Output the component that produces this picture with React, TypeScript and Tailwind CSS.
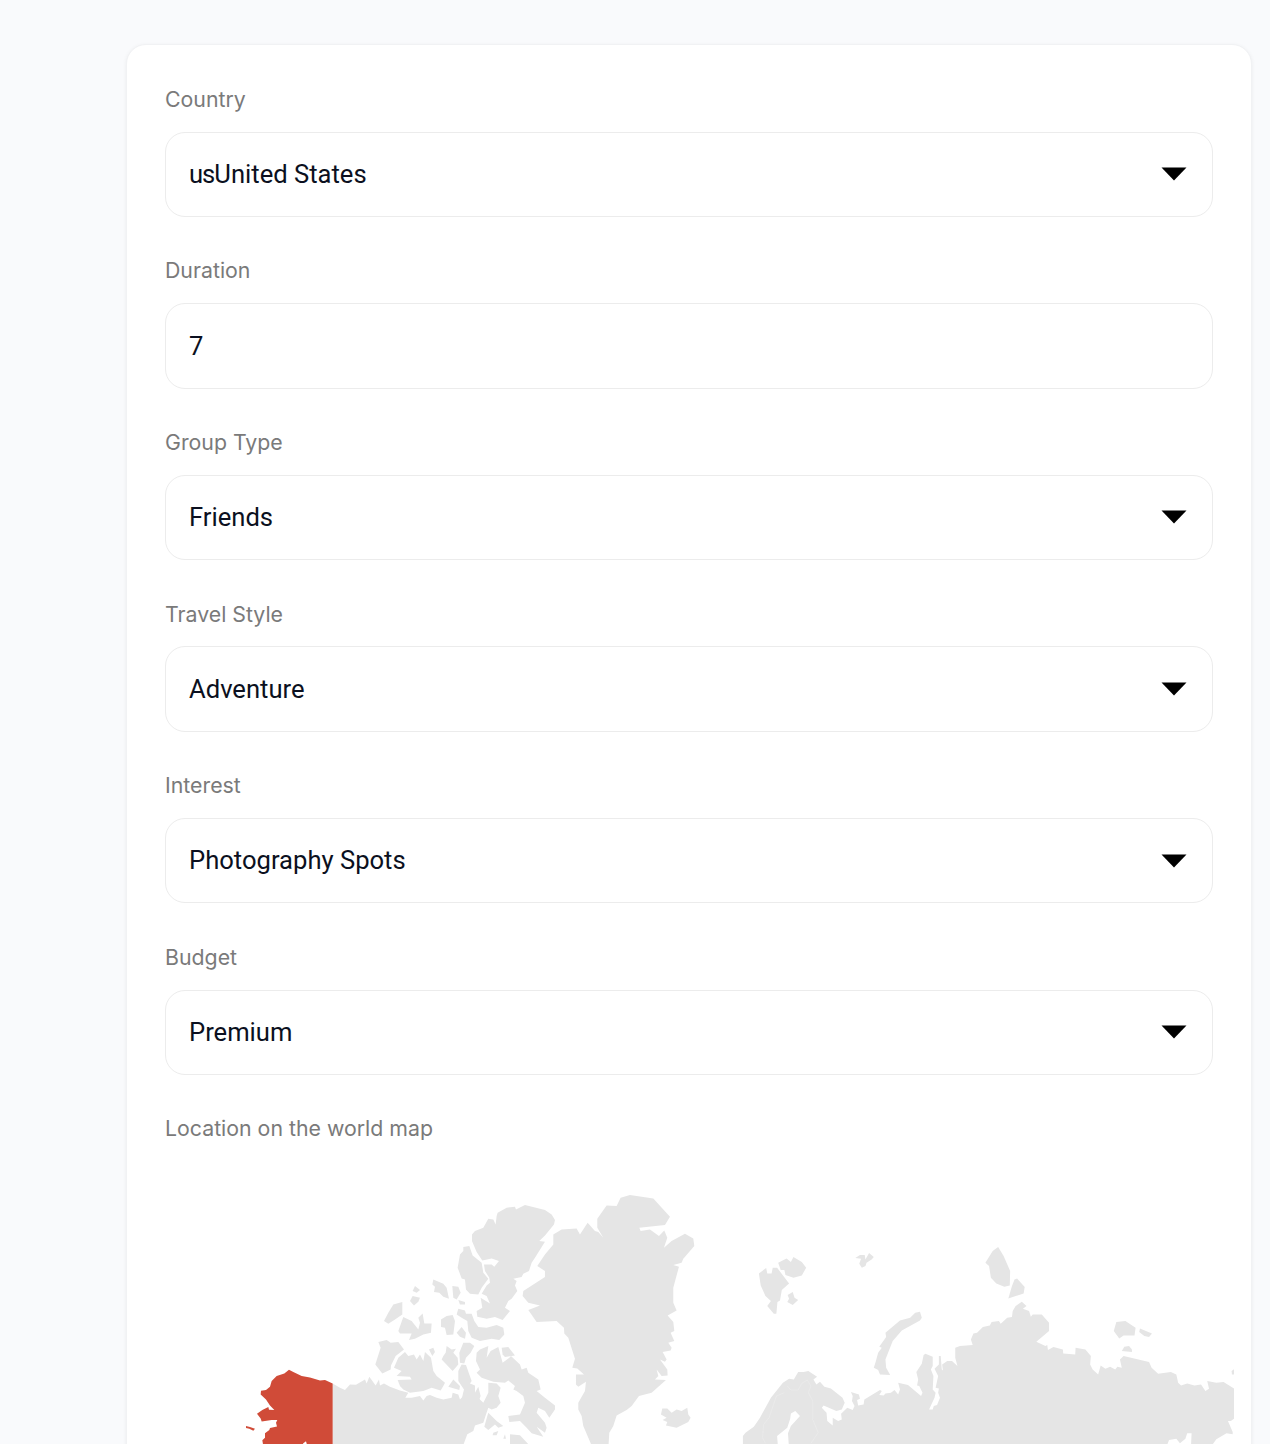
const pts = {
  alaska: "308,612 285,602 270,603 240,594 215,590 190,578 177,571 163,582 140,590 125,605 120,622 108,632 93,634 92,645 108,660 120,678 133,692 117,691 115,683 97,692 81,703 92,717 95,726 125,722 142,722 138,730 141,741 120,746 118,752 105,762 105,775 97,783 105,830 308,830",
  aleut: "48,740 60,743 75,748 70,754 58,748 48,746",
};
const west = [
  "308,612 330,625 345,632 360,615 378,616 405,600 410,612 418,592 437,618 447,600 450,618 462,612 480,622 510,633 535,640 526,655 545,655 570,650 580,663 590,650 600,647 620,655 640,660 665,655 668,640 685,645 690,660 700,650 703,630 725,640 735,640 750,660 760,670 775,640 775,610 800,612 812,625 805,650 812,670 800,685 785,690 775,685 768,705 760,730 735,738 730,755 712,765 695,810 308,810",
  "803,100 830,85 855,82 858,90 885,77 945,92 965,105 975,122 972,135 945,168 928,185 945,187 915,235 905,250 897,275 880,283 875,293 850,298 860,305 855,318 862,335 845,358 835,365 825,385 840,395 818,422 795,413 770,418 742,412 740,395 757,385 752,355 780,372 770,350 755,343 770,318 780,310 778,295 765,275 762,255 785,255 793,262 807,245 785,237 757,243 740,218 726,185 726,165 735,155 760,145 775,118 790,120 797,135 800,110",
  "700,203 718,200 728,228 755,250 760,280 775,298 755,325 745,345 720,343 708,330 705,300 695,297 683,265 690,225 700,215",
  "610,300 640,313 650,325 657,358 640,352 628,340 612,338 615,322 607,315",
  "667,320 685,322 692,340 680,360 670,355",
  "555,320 570,332 560,340 548,335",
  "548,350 570,355 565,367 552,378 540,365",
  "685,362 705,368 705,375 690,375",
  "490,375 517,368 517,405 495,420 475,433 462,425 475,400",
  "520,413 545,425 565,450 570,430 565,415 578,402 583,432 605,432 603,460 580,465 555,478 537,482 545,462 510,462 505,455",
  "685,388 705,393 708,403 725,403 733,425 745,443 770,445 800,437 820,445 823,465 808,482 785,478 750,485 725,475 715,455 712,425 695,415 680,405",
  "650,410 668,407 675,425 670,465 650,467 645,445 633,443 633,420",
  "695,443 708,460 705,478 690,472 680,460",
  "445,488 470,482 482,490 505,488 522,510 497,530 483,558 482,570 457,582 436,555 452,505",
  "525,518 535,530 552,525 560,540 570,525 580,545 585,518 603,535 610,575 620,590 645,610 640,620 632,633 605,625 580,635 540,640 520,630 510,620 503,602 545,600 540,592 500,590 515,575 492,565 505,535",
  "597,510 610,505 615,518 607,530",
  "650,500 665,510 678,508 670,520 683,535 685,555 668,575 635,540 640,530 647,520",
  "700,490 720,490 733,500 722,520 708,535 703,552 690,550 688,520",
  "750,510 775,500 770,535 782,515 805,503 818,550 838,535 843,530 870,555 875,570 890,565 895,580 925,600 932,630 920,635 945,655 975,678 975,690 958,715 945,695 925,685 920,700 945,730 950,745 945,760 920,742 940,772 905,762 890,745 870,725 838,728 835,710 870,705 885,670 880,650 860,635 850,630 855,620 835,603 825,610 790,607 755,595 740,580 750,570 738,545 740,520",
  "815,505 835,503 855,528 825,533 818,525",
  "670,600 690,620 688,632 665,625 655,622",
  "685,575 695,555 708,557 725,605 720,612 735,618 735,640 745,622 752,650 740,680 690,680 702,630 685,605",
  "790,760 805,755 800,768 788,768",
  "825,765 828,778 820,778",
  "775,700 800,725 820,740 805,745 795,735 775,752 763,742 772,710",
  "840,765 870,768 910,810 840,810",
  "1130,78 1160,80 1172,55 1200,47 1270,57 1320,112 1305,137 1228,145 1232,155 1260,150 1287,170 1303,153 1312,175 1302,205 1325,185 1365,163 1390,177 1393,200 1360,238 1355,250 1330,257 1347,262 1330,325 1330,370 1340,393 1313,408 1330,428 1333,455 1322,460 1333,485 1315,490 1325,505 1322,513 1298,518 1310,540 1305,547 1290,540 1312,570 1313,588 1295,590 1280,570 1285,590 1275,600 1308,602 1265,640 1227,650 1205,680 1190,692 1160,708 1150,740 1138,760 1135,810 1090,810 1060,740 1055,710 1045,690 1045,670 1065,635 1068,607 1045,622 1038,615 1038,585 1062,585 1042,567 1027,565 1035,538 1015,475 1003,462 1002,445 980,425 920,428 895,392 930,378 895,370 878,350 880,335 945,293 945,275 922,260 945,225 970,195 970,165 995,150 1040,147 1050,165 1073,130 1095,155 1105,158 1120,175 1102,145 1102,118",
  "1297,687 1312,687 1325,700 1340,690 1355,695 1372,685 1375,705 1382,715 1375,728 1340,745 1308,738 1312,728 1298,722 1310,715 1293,705",
];
const east = [
  "162,282 182,266 185,282 197,282 200,265 212,265 245,312 225,332 220,363 213,368 210,403 203,403 185,380 195,365 180,350 167,318",
  "215,250 238,237 250,248 257,233 280,248 292,265 280,288 257,295 235,287 232,272 222,272",
  "241,347 255,338 260,355 270,362 255,377 240,368 245,358",
  "427,236 440,227 453,227 455,240 465,221 478,233 472,240 458,250 455,260 445,265 438,253 443,238",
  "785,250 805,215 820,203 835,230 853,275 852,318 837,322 815,312 800,295 795,260",
  "865,300 872,297 893,323 890,342 848,357 858,320",
  "510,460 550,423 578,415 592,400 605,397 610,415 605,423 555,453 530,485 510,540 512,565 523,587 495,585 490,572 478,565 483,548 490,520 500,505 493,502 512,473",
  "1145,428 1170,425 1198,445 1195,468 1165,468 1153,477 1138,455",
  "1210,447 1243,462 1235,473 1222,470 1208,458",
  "1160,515 1167,502 1180,500 1188,510 1188,518",
  "1462,575 1472,567 1472,585 1463,585",
  "118,770 125,760 148,742 165,715 195,655 228,610 245,598 258,600 270,578 285,578 298,575 322,592 312,600 320,615 330,607 342,622 360,627 392,655 398,670 390,690 375,695 340,678 335,685 348,700 350,725 365,738 365,715 380,725 390,720 388,703 405,685 420,692 425,680 418,665 420,650 415,638 437,645 440,658 432,662 435,678 450,675 452,660 495,632 500,635 493,647 505,648 510,642 525,640 535,632 545,645 550,630 545,610 572,617 608,650 612,640 603,620 597,618 600,600 595,578 610,553 615,527 620,523 640,532 640,560 635,570 642,590 640,630 648,640 645,655 630,690 640,690 643,680 652,677 660,655 655,640 657,627 648,625 655,590 645,568 657,555 657,530 662,530 665,570 668,573 666,555 680,545 693,545 708,560 702,535 702,505 715,500 750,497 745,480 752,462 762,460 778,443 797,438 802,428 822,425 827,433 845,415 858,413 860,395 868,380 885,367 898,380 888,388 905,395 910,412 915,405 940,405 960,430 960,455 925,487 950,500 955,497 957,512 972,503 998,510 999,522 1032,525 1033,505 1060,510 1075,530 1073,555 1080,570 1095,585 1102,558 1115,568 1128,562 1142,570 1148,562 1160,565 1155,540 1165,530 1235,548 1242,565 1260,583 1295,578 1310,585 1315,610 1323,618 1340,612 1360,618 1378,615 1390,635 1400,628 1395,605 1420,610 1440,608 1472,630 1472,715 1460,725 1452,725 1465,758 1465,765 1448,762 1420,780 1400,810 1350,810 1352,762 1340,762 1335,778 1320,792 1310,778 1290,782 1280,810 118,810",
];

function Caret() {
  return (
    <svg className="w-[26px] h-[14px] shrink-0" viewBox="0 0 26 14">
      <polygon points="0.5,0.5 25.5,0.5 13,13.5" fill="#000" />
    </svg>
  );
}

function Field({ label, value, select = true }: { label: string; value: React.ReactNode; select?: boolean }) {
  return (
    <div className="flex flex-col">
      <div className="h-[28px] leading-[28px] text-[21.3px] text-[#7a7a7a] font-['Inter',sans-serif]">{label}</div>
      <div className="mt-[18.75px] h-[85.4px] rounded-[20px] border border-[#ececec] flex items-center justify-between pl-[23px] pr-[25px] bg-white">
        <span className="pb-[0.4px] text-[25.6px] text-[#0b1020] font-['Roboto',sans-serif]">{value}</span>
        {select ? <Caret /> : null}
      </div>
    </div>
  );
}

export default function App() {
  return (
    <div className="h-[1444px] overflow-hidden bg-[#f9fafc] pl-[126px] pr-[18px] pt-[44px]">
      <div className="h-[1500px] rounded-[20px] bg-white border border-[#f1f2f4] shadow-[0_1px_4px_rgba(0,0,0,0.06)] px-[38px] pt-[39.9px]">
        <div className="flex flex-col gap-[39.45px]">
          <Field label="Country" value={<><span className="tracking-[-1px]">us</span>United States</>} />
          <Field label="Duration" value="7" select={false} />
          <Field label="Group Type" value="Friends" />
          <Field label="Travel Style" value="Adventure" />
          <Field label="Interest" value="Photography Spots" />
          <Field label="Budget" value="Premium" />
          <div className="flex flex-col">
            <div className="h-[28px] leading-[28px] text-[21.3px] text-[#7a7a7a] font-['Inter',sans-serif]">Location on the world map</div>
            <svg className="mt-[17.1px] block w-[1069px] h-[300px]" viewBox="165 1159.6 1069 300">
              <g transform="translate(230 1180) scale(0.3333)">
                <g fill="#e5e5e5">
                  {west.map((p) => (
                    <polygon key={p} points={p} />
                  ))}
                </g>
                <polygon points="848,655 858,645 865,655 862,670 850,672" fill="#fff" />
                <polygon points={pts.alaska} fill="#d04b38" />
                <polygon points={pts.aleut} fill="#d04b38" />
                <polygon points="220,792 228,786 232,800 215,800" fill="#fff" />
              </g>
              <g transform="translate(700 1180) scale(0.3636 0.3333)">
                <g fill="#e5e5e5">
                  {east.map((p) => (
                    <polygon key={p} points={p} />
                  ))}
                </g>
                <polygon points="215,810 212,770 240,745 248,718 250,702 262,695 275,710 250,740 242,762 245,810" fill="#fff" />
                <polyline points="240,620 250,632 270,632 280,612 295,602 305,620 298,640 310,665 310,720 325,760 305,792" fill="none" stroke="#f0f0f0" strokeWidth="1.2" />
                <polyline points="232,640 210,650 190,715 175,735 172,775 180,792" fill="none" stroke="#f0f0f0" strokeWidth="1.2" />
              </g>
            </svg>
          </div>
        </div>
      </div>
    </div>
  );
}
